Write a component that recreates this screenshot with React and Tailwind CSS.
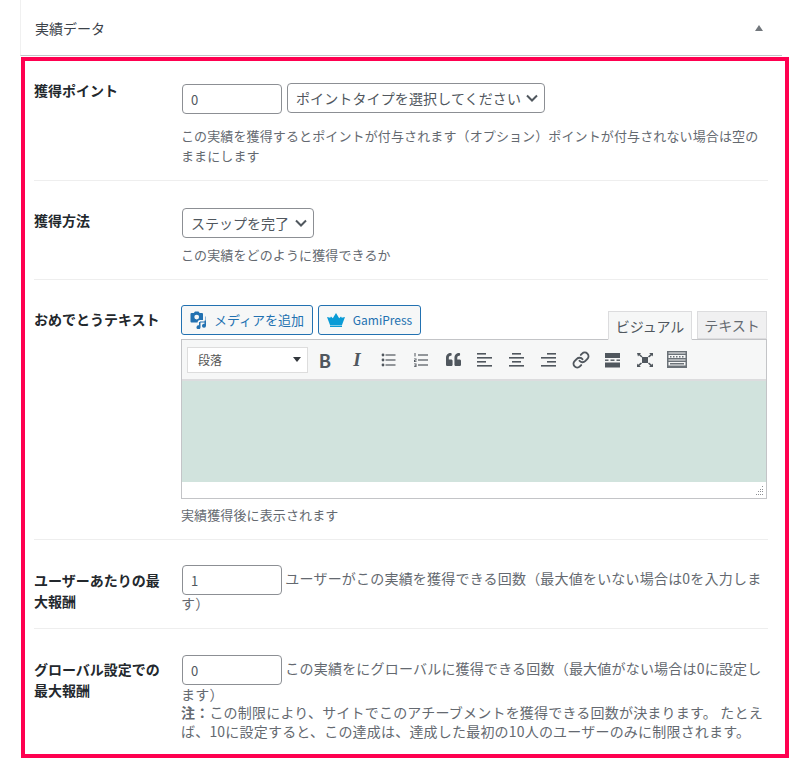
import React from 'react'
import { Link } from 'lucide-react'
import { FaQuoteLeft } from 'react-icons/fa'

const fontStack = { fontFamily: '"Noto Sans CJK JP", "Noto Sans", sans-serif' }

const AlignIcon = ({ rows }) => (
  <svg width="16" height="16" viewBox="0 0 16 16" fill="#50575e">
    {rows.map(([x, w], i) => (
      <rect key={i} x={x} y={1 + i * 4} width={w} height="1.6" />
    ))}
  </svg>
)

const ListIcon = () => (
  <svg width="16" height="16" viewBox="0 0 16 16" fill="#50575e">
    <circle cx="2" cy="3" r="1.400" />
    <circle cx="2" cy="8" r="1.400" />
    <circle cx="2" cy="13" r="1.400" />
    <rect x="4.500" y="2.400" width="10" height="1.200" />
    <rect x="4.500" y="7.400" width="10" height="1.200" />
    <rect x="4.500" y="12.400" width="10" height="1.200" />
  </svg>
)

const NumListIcon = () => (
  <svg width="16" height="16" viewBox="0 0 16 16" fill="#50575e">
    <path d="M1.500 1h1v3.500h-1zM1 6.500h2.500v2H2v.7h1.500V10H1V8h1.500v-.7H1zM1 11.500h2.500V15H1v-.8h1.500v-.6H1.300v-.7h1.200v-.6H1z" />
    <rect x="5" y="2.400" width="10" height="1.200" />
    <rect x="5" y="7.400" width="10" height="1.200" />
    <rect x="5" y="12.400" width="10" height="1.200" />
  </svg>
)

const MoreIcon = () => (
  <svg width="16" height="16" viewBox="0 0 16 16" fill="#50575e">
    <rect x="0" y="1" width="15" height="5" />
    <rect x="0" y="7.500" width="3.500" height="1.400" />
    <rect x="5.500" y="7.500" width="4" height="1.400" />
    <rect x="11.500" y="7.500" width="3.500" height="1.400" />
    <rect x="0" y="10.500" width="15" height="5" />
  </svg>
)

const FullscreenIcon = () => (
  <svg width="18" height="16" viewBox="0 0 18 16" fill="#50575e">
    <rect x="6" y="5" width="6" height="6" />
    <path d="M1 1h4L4 2.200 6.500 4.500 5.500 5.500 3 3.200 2 4.500zM17 1v3.500L16 3.200 13 5.500 12 4.500 14.500 2.200 13 1zM1 15v-3.500L2 12.800 5 10.500 6 11.500 3.500 13.800 5 15zM17 15h-4l1.300-1.200L12 11.500l1-1 2.800 2.300L17 11.500z" />
  </svg>
)

const KitchenIcon = () => (
  <svg width="20" height="17" viewBox="0 0 20 17" fill="#6b7278">
    <path fillRule="evenodd" d="M0 0h20v17H0zM1.500 1.500v1h17v-1zM1.500 4v3h17V4zM1.500 8.500v1h17v-1zM1.500 11v3.500h17V11z" />
    <path d="M3 5h1.500v1.500H3zM6 5h1.500v1.500H6zM9 5h1.500v1.500H9zM12 5h1.500v1.500H12zM15 5h1.500v1.500H15zM3 12h14v1.500H3z" />
  </svg>
)

const MediaIcon = () => (
  <svg width="18" height="18" viewBox="0 0 18 18" fill="#2271b1">
    <path fillRule="evenodd" d="M1.500 2h2.300L5 .5h3.500L9.700 2H12a1 1 0 0 1 1 1v6H9.800a2.500 2.500 0 0 0-2.300 2.500H1.500a1 1 0 0 1-1-1V3a1 1 0 0 1 1-1zM6.700 3.700a2.400 2.400 0 1 0 0 4.800 2.400 2.400 0 0 0 0-4.800z" />
    <path d="M10 10.500h5.500v1H10zM14.500 5.500H16v9.200a2 2 0 1 1-1.500-1.900V9.500h1v-4zM9.500 11h1v5.200a2 2 0 1 1-1.500-1.900V11z" />
  </svg>
)

const CrownIcon = () => (
  <svg width="18" height="14" viewBox="0 0 18 14" fill="#0a9bd6">
    <path d="M9 0l3.200 5.200 1.800-1.700.8 1.200L18 4l-3 8H3L0 4l3.200.7.800-1.200 1.800 1.700z" />
    <rect x="3" y="12.500" width="12" height="1.500" />
  </svg>
)

const Chevron = () => (
  <svg width="12" height="8" viewBox="0 0 12 8" fill="none" stroke="#50575e" strokeWidth="2">
    <path d="M1 1.500l5 5 5-5" />
  </svg>
)

const NumberInput = ({ value }) => (
  <input
    readOnly
    value={value}
    className="ml-px inline-block h-[30px] w-[100px] rounded border border-[#8c8f94] bg-white px-2 align-middle text-[13px] text-[#50575e]"
  />
)

const ToolBtn = ({ children }) => <div className="flex w-8 items-center justify-center">{children}</div>

const Row = ({ label, labelClass, className, children }) => (
  <div className={`flex border-b border-[#eeeeee] ${className}`}>
    <div className={`w-[147px] shrink-0 pr-2 text-sm font-bold leading-[21px] text-[#23282d] ${labelClass}`}>{label}</div>
    <div className="min-w-0 flex-1 text-sm text-[#646970]">{children}</div>
  </div>
)

const App = () => {
  return (
    <div className="h-[763px] w-[800px] overflow-hidden bg-white" style={fontStack}>
      {/* Metabox header */}
      <div className="ml-5 flex h-14 w-[762px] items-center justify-between border-b border-l border-b-[#c3c4c7] border-l-[#f0f0f0] pl-[14px] pr-[19px]">
        <span className="text-sm text-[#3c434a]">実績データ</span>
        <span className="h-0 w-0 border-x-[4px] border-b-[6px] border-x-transparent border-b-[#72777c]"></span>
      </div>

      {/* Highlighted box */}
      <div className="ml-[21px] mt-px h-[701px] w-[768px] border-[4px] border-[#ff0050] pl-[9px] pr-[17px]">
        <Row label="獲得ポイント" labelClass="" className="h-[120px] pt-[19px]">
          <div className="mt-[4px] flex items-start gap-[5px]">
            <NumberInput value="0" />
            <div className="-mt-px flex h-[30px] w-[258px] items-center justify-between rounded border border-[#8c8f94] bg-white pl-2 pr-[6px] text-sm tracking-[0.12px] text-[#50575e]">
              ポイントタイプを選択してください
              <Chevron />
            </div>
          </div>
          <p className="mt-[12px] text-[13px] leading-[20px] tracking-[0.12px]">この実績を獲得するとポイントが付与されます（オプション）ポイントが付与されない場合は空のままにします</p>
        </Row>

        <Row label="獲得方法" labelClass="pt-[2px]" className="h-[99px] pt-[27px]">
          <div className="ml-px flex h-[30px] w-[132px] items-center justify-between rounded border border-[#8c8f94] bg-white pl-2 pr-[6px] text-sm text-[#50575e]">
            ステップを完了
            <Chevron />
          </div>
          <p className="mt-[7px] text-[13px] leading-[20px] tracking-[0.12px]">この実績をどのように獲得できるか</p>
        </Row>

        <Row label="おめでとうテキスト" labelClass="pt-[4px]" className="h-[260px] pt-[25px]">
          <div className="flex h-[34px] items-start justify-between">
            <div className="flex gap-[5px]">
              <button className="flex h-[30px] w-[132px] items-center justify-center gap-[6px] rounded-[3px] border border-[#2271b1] bg-[#f6f7f7] text-[13px] text-[#2271b1]">
                <MediaIcon />メディアを追加
              </button>
              <button className="flex h-[30px] w-[103px] items-center justify-center gap-[8px] rounded-[3px] border border-[#2271b1] bg-[#f6f7f7] text-xs text-[#2271b1]">
                <CrownIcon />GamiPress
              </button>
            </div>
            <div className="z-10 mr-px mt-[6px] flex items-start gap-[5px]">
              <div className="flex h-[29px] w-[84px] items-center justify-center border border-[#dcdcde] border-b-[#f6f7f7] bg-[#f6f7f7] text-sm text-[#50575e]">ビジュアル</div>
              <div className="flex h-[28px] w-[70px] items-center justify-center border border-[#dcdcde] bg-[#f0f0f1] text-sm text-[#646970]">テキスト</div>
            </div>
          </div>
          <div className="mr-px border border-[#c3c4c7]">
            <div className="flex h-[41px] items-center border-b-2 border-[#dcdcde] bg-[#f6f7f7] pl-[5px] text-[#50575e]">
              <div className="flex h-[26px] w-[121px] items-center justify-between border border-[#dddddd] bg-white pl-[10px] pr-[6px] text-xs text-[#555555]">
                段落
                <span className="h-0 w-0 border-x-[4px] border-t-[5px] border-x-transparent border-t-[#32373c]"></span>
              </div>
              <div className="ml-px flex items-center">
                <ToolBtn><span className="text-[18px] font-bold leading-none">B</span></ToolBtn>
                <ToolBtn><span className="text-[19px] font-bold italic leading-none" style={{ fontFamily: '"Liberation Serif", serif' }}>I</span></ToolBtn>
                <ToolBtn><ListIcon /></ToolBtn>
                <ToolBtn><NumListIcon /></ToolBtn>
                <ToolBtn><FaQuoteLeft size={15} /></ToolBtn>
                <ToolBtn><AlignIcon rows={[[0, 9], [0, 15], [0, 9], [0, 15]]} /></ToolBtn>
                <ToolBtn><AlignIcon rows={[[3, 9], [0, 15], [3, 9], [0, 15]]} /></ToolBtn>
                <ToolBtn><AlignIcon rows={[[6, 9], [0, 15], [6, 9], [0, 15]]} /></ToolBtn>
                <ToolBtn><Link size={18} strokeWidth={2.6} /></ToolBtn>
                <ToolBtn><MoreIcon /></ToolBtn>
                <ToolBtn><FullscreenIcon /></ToolBtn>
                <ToolBtn><KitchenIcon /></ToolBtn>
              </div>
            </div>
            <div className="h-[101px] bg-[#d1e3dd]"></div>
            <div className="relative h-[16px] bg-white">
              <svg className="absolute bottom-[2px] right-[2px]" width="10" height="10" viewBox="0 0 10 10" fill="#8c8f94">
                <path d="M8 0h1v1H8zM6 3h1v1H6zM8 3h1v1H8zM4 5h1v1H4zM6 5h1v1H6zM8 5h1v1H8zM2 8h1v1H2zM4 8h1v1H4zM6 8h1v1H6zM8 8h1v1H8z" />
              </svg>
            </div>
          </div>
          <p className="mt-[6px] text-[13px] leading-[20px] tracking-[0.12px]">実績獲得後に表示されます</p>
        </Row>

        <Row label="ユーザーあたりの最大報酬" labelClass="pt-[5px]" className="h-[89px] pt-[25px]">
          <p className="leading-[17px] tracking-[0.2px]">
            <NumberInput value="1" /> ユーザーがこの実績を獲得できる回数（最大値をいない場合は0を入力します）
          </p>
        </Row>

        <div className="flex pt-[26px]">
          <div className="w-[147px] shrink-0 pr-2 pt-[4px] text-sm font-bold leading-[21px] text-[#23282d]">グローバル設定での最大報酬</div>
          <div className="min-w-0 flex-1 text-sm leading-[19px] tracking-[0.2px] text-[#646970]">
            <p>
              <NumberInput value="0" /> この実績をにグローバルに獲得できる回数（最大値がない場合は0に設定します）
            </p>
            <p className="-mt-px"><strong className="font-bold">注：</strong>この制限により、サイトでこのアチーブメントを獲得できる回数が決まります。 たとえば、10に設定すると、この達成は、達成した最初の10人のユーザーのみに制限されます。</p>
          </div>
        </div>
      </div>
    </div>
  )
}

export default App
